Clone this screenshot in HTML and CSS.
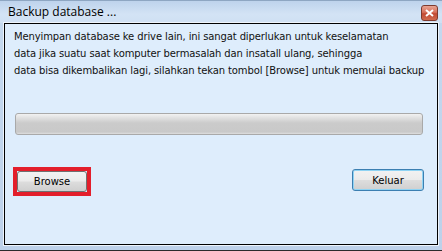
FILE: index.html
```html
<!DOCTYPE html>
<html lang="id">
<head>
  <meta charset="UTF-8" />
  <title>Backup database ...</title>
  <link rel="stylesheet" href="styles.css">
</head>
<body>
  <div class="window">
    <div class="titlebar">
      <span class="title">Backup database ...</span>
      <button class="close" aria-label="Tutup">
        <svg width="9" height="8" viewBox="0 0 9 8"><path d="M1 1 L8 7 M8 1 L1 7" stroke="#fff" stroke-width="2"/></svg>
      </button>
    </div>
    <div class="client">
      <p class="info">Menyimpan database ke drive lain, ini sangat diperlukan untuk keselamatan<br>data jika suatu saat komputer bermasalah dan insatall ulang, sehingga<br>data bisa dikembalikan lagi, silahkan tekan tombol [Browse] untuk memulai backup</p>
      <div class="progress"></div>
      <div class="actions">
        <div class="highlight"><button class="btn">Browse</button></div>
        <button class="btn default">Keluar</button>
      </div>
    </div>
  </div>
</body>
</html>
```
FILE: styles.css
```css
html, body {
  margin: 0;
  padding: 0;
}
body {
  width: 442px;
  height: 251px;
  overflow: hidden;
  font-family: "DejaVu Sans", Verdana, sans-serif;
  background: #c3d6ec;
}
.window {
  height: 250px;
  border-bottom: 1px solid #2b2b2b;
  background: linear-gradient(to bottom, #c5d9ef, #bdd1ea);
  display: flex;
  flex-direction: column;
}
.titlebar {
  height: 23px;
  display: flex;
  align-items: center;
  justify-content: space-between;
  padding: 0 4px 0 8px;
  background: linear-gradient(to bottom, #bed3ec 0%, #d3e3f5 60%, #cfe0f3 100%);
  border-top: 1px solid #8ea6c2;
  box-sizing: border-box;
}
.title {
  font-family: "Open Sans", "DejaVu Sans", sans-serif;
  font-size: 12px;
  color: #000;
  padding-bottom: 1px;
}
.close {
  width: 17px;
  height: 16px;
  margin-top: 2px;
  padding: 0;
  border: 1px solid #7d3a2e;
  border-radius: 3px;
  background: linear-gradient(to bottom, #e8a493 0%, #d7705a 45%, #c24a33 55%, #cf6a4e 100%);
  display: flex;
  align-items: center;
  justify-content: center;
}
.client {
  margin: 0 4px;
  height: 222px;
  border: 1px solid #000;
  box-shadow: 0 0 0 1px #eef4fb;
  background: #deedfc;
  padding: 4px 9px 0 9px;
  box-sizing: border-box;
}
.info {
  margin: 0;
  font-size: 10px;
  line-height: 17px;
  color: #111;
  letter-spacing: -0.12px;
  white-space: nowrap;
}
.progress {
  margin: 34px 5px 0 1px;
  height: 22px;
  border: 1px solid #a9a9a9;
  border-radius: 3px;
  background: linear-gradient(to bottom, #f2f2f2 0%, #e0e0e0 20%, #cbcbcb 45%, #c9c9c9 90%, #dedede 100%);
  box-sizing: border-box;
}
.actions {
  margin-top: 32px;
  display: flex;
  justify-content: space-between;
  align-items: flex-start;
  padding-right: 4px;
  margin-left: -1px;
}
.highlight {
  border: 4px solid #e31e2b;
  background: #deedfc;
}
.btn {
  display: block;
  width: 70px;
  height: 21px;
  padding: 0;
  font-family: "DejaVu Sans", Verdana, sans-serif;
  font-size: 10px;
  color: #000;
  border: 1px solid #707070;
  border-radius: 3px;
  background: linear-gradient(to bottom, #f2f2f2 0%, #ebebeb 48%, #dddddd 52%, #cfcfcf 100%);
}
.default {
  width: 72px;
  height: 22px;
  margin-top: 2px;
  border-color: #3c7fb1;
  box-shadow: inset 0 0 0 1px #8fd3f3;
}
```
